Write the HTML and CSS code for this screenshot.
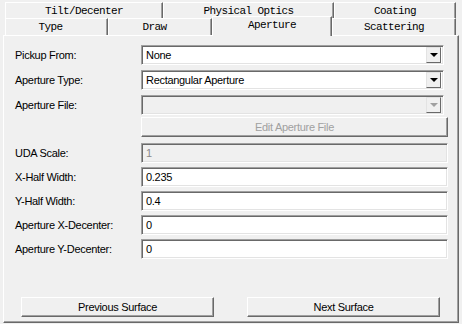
FILE: index.html
```html
<!DOCTYPE html>
<html lang="en">
<head>
    <meta charset="UTF-8">
    <title>Surface Properties</title>
    <link rel="stylesheet" href="styles.css">
</head>
<body>
    <div class="tab-row back">
        <div class="tab w-tilt">Tilt/Decenter</div>
        <div class="tab w-phys">Physical Optics</div>
        <div class="tab w-coat">Coating</div>
    </div>
    <div class="tab-row front">
        <div class="tab w-type">Type</div>
        <div class="tab w-draw">Draw</div>
        <div class="tab w-aper active">Aperture</div>
        <div class="tab w-scat">Scattering</div>
    </div>

    <div class="panel">
        <div class="form">
            <div class="row">
                <span class="label">Pickup From:</span>
                <div class="combo"><span class="value">None</span><span class="arrow"></span></div>
            </div>
            <div class="row">
                <span class="label">Aperture Type:</span>
                <div class="combo"><span class="value">Rectangular Aperture</span><span class="arrow"></span></div>
            </div>
            <div class="row tight">
                <span class="label">Aperture File:</span>
                <div class="combo disabled"><span class="value"></span><span class="arrow"></span></div>
            </div>
            <div class="row spaced">
                <span class="label"></span>
                <button class="btn wide" disabled>Edit Aperture File</button>
            </div>
            <div class="row edit-row">
                <span class="label">UDA Scale:</span>
                <div class="edit disabled">1</div>
            </div>
            <div class="row edit-row">
                <span class="label">X-Half Width:</span>
                <div class="edit">0.235</div>
            </div>
            <div class="row edit-row">
                <span class="label">Y-Half Width:</span>
                <div class="edit">0.4</div>
            </div>
            <div class="row edit-row">
                <span class="label">Aperture X-Decenter:</span>
                <div class="edit">0</div>
            </div>
            <div class="row edit-row">
                <span class="label">Aperture Y-Decenter:</span>
                <div class="edit">0</div>
            </div>
        </div>

        <div class="nav">
            <button class="btn">Previous Surface</button>
            <button class="btn">Next Surface</button>
        </div>
    </div>
</body>
</html>
```

FILE: styles.css
```css
body {
    margin: 0;
    width: 462px;
    height: 324px;
    overflow: hidden;
    background: #f0f0f0;
    font-family: "Liberation Sans", Arial, sans-serif;
    font-size: 11px;
    letter-spacing: -0.3px;
    color: #000;
}

/* tabs */
.tab-row {
    display: flex;
    margin-left: 5px;
}
.tab-row.back {
    margin-top: 2px;
    height: 16px;
}
.tab-row.front {
    height: 17px;
}
.tab {
    box-sizing: border-box;
    height: 100%;
    border-top: 1px solid #fff;
    border-left: 1px solid #fff;
    border-right: 1px solid #696969;
    box-shadow: inset -1px 0 #a0a0a0;
    background: #f0f0f0;
    font-family: "Liberation Mono", "DejaVu Sans Mono", monospace;
    font-size: 11px;
    letter-spacing: -0.6px;
    display: flex;
    align-items: center;
    justify-content: center;
}
.w-tilt { width: 158px; }
.w-phys { width: 171px; }
.w-coat { width: 122px; }
.w-type { width: 103px; padding-right: 12px; }
.w-draw { width: 104px; padding-right: 11px; }
.w-aper { width: 120px; }
.w-scat { width: 124px; }
.tab.active {
    position: relative;
    z-index: 1;
    height: 20px;
    margin-top: -2px;
    padding-bottom: 3px;
}

/* page panel */
.panel {
    box-sizing: border-box;
    width: 456px;
    height: 288px;
    margin-left: 3px;
    border-top: 1px solid #fff;
    border-left: 1px solid #fff;
    border-right: 1px solid #696969;
    border-bottom: 1px solid #696969;
    box-shadow: inset -1px -1px #a0a0a0;
    display: flex;
    flex-direction: column;
}
.form {
    padding: 9px 0 0 11px;
}
.row {
    display: flex;
    align-items: center;
    height: 20px;
    margin-bottom: 5px;
}
.row.tight { margin-bottom: 2px; }
.row.spaced { margin-bottom: 6px; }
.row.edit-row { margin-bottom: 4px; }
.label {
    width: 126px;
    flex-shrink: 0;
}

/* combo boxes */
.combo, .edit {
    box-sizing: border-box;
    height: 20px;
    background: #fff;
    border: 1px solid;
    border-color: #a0a0a0 #fff #fff #a0a0a0;
    box-shadow: inset 1px 1px #696969, inset -1px -1px #e3e3e3;
    display: flex;
    align-items: center;
    padding-left: 4px;
}
.combo {
    width: 303px;
}
.combo .arrow {
    margin-left: auto;
    margin-right: 2px;
    box-sizing: border-box;
    width: 15px;
    height: 16px;
    background: #f0f0f0;
    border: 1px solid;
    border-color: #e3e3e3 #696969 #696969 #e3e3e3;
    display: flex;
    align-items: center;
    justify-content: center;
}
.combo .arrow::after {
    content: "";
    border-left: 4px solid transparent;
    border-right: 4px solid transparent;
    border-top: 4px solid #000;
}
.combo.disabled {
    background: #f0f0f0;
}
.combo.disabled .arrow::after {
    border-top-color: #a0a0a0;
}

.edit {
    width: 307px;
}
.edit.disabled {
    background: #f0f0f0;
    color: #8a8a8a;
}

/* buttons */
.btn {
    box-sizing: border-box;
    height: 20px;
    padding: 0;
    background: #f0f0f0;
    border: 1px solid;
    border-color: #fff #696969 #696969 #fff;
    box-shadow: inset -1px -1px #a0a0a0;
    font-family: "Liberation Sans", Arial, sans-serif;
    font-size: 11px;
    letter-spacing: -0.3px;
    color: #000;
}
.btn.wide {
    width: 307px;
}
.btn:disabled {
    color: #a0a0a0;
}
.nav {
    margin-top: auto;
    display: flex;
    gap: 33px;
    padding: 0 0 5px 17px;
}
.nav .btn {
    width: 193px;
}
```
